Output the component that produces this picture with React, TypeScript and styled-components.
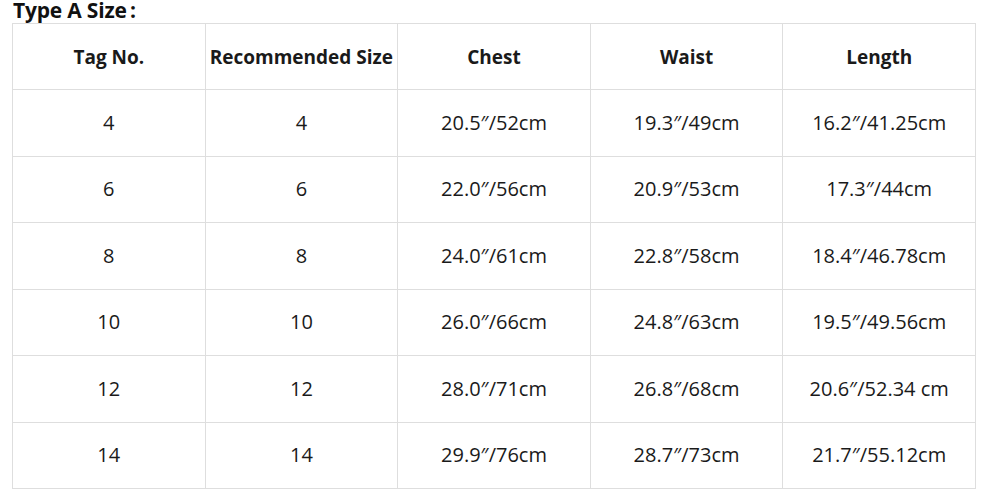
import styled, { createGlobalStyle } from 'styled-components';

const GlobalStyle = createGlobalStyle`
	html, body {
		margin: 0;
		padding: 0;
		background: #ffffff;
	}
	body {
		font-family: 'Open Sans', 'Noto Sans', sans-serif;
		color: #1c1c1c;
	}
`;

const Wrapper = styled.div`
	padding: 0 25px 0 12px;
	width: 1000px;
	box-sizing: border-box;
`;

const Title = styled.div`
	font-size: 21px;
	font-weight: 700;
	line-height: 20px;
	height: 23px;
	margin: 0 0 0 1px;
	color: #111;
	letter-spacing: -0.2px;
`;

const Table = styled.table`
	width: 964px;
	border-collapse: collapse;
	table-layout: fixed;
	border: 1px solid #dedede;
`;

const HeadCell = styled.th`
	height: 65px;
	border: 1px solid #dedede;
	font-size: 19px;
	line-height: 22px;
	font-weight: 700;
	text-align: center;
	padding: 0;
	white-space: nowrap;
	color: #1a1a1a;
`;

const Cell = styled.td`
	height: 65.5px;
	border: 1px solid #dedede;
	font-size: 20px;
	line-height: 22px;
	font-weight: 400;
	text-align: center;
	padding: 0;
	white-space: nowrap;
	color: #1a1a1a;
`;

const headers = ['Tag No.', 'Recommended Size', 'Chest', 'Waist', 'Length'];

const rows = [
	['4', '4', '20.5″/52cm', '19.3″/49cm', '16.2″/41.25cm'],
	['6', '6', '22.0″/56cm', '20.9″/53cm', '17.3″/44cm'],
	['8', '8', '24.0″/61cm', '22.8″/58cm', '18.4″/46.78cm'],
	['10', '10', '26.0″/66cm', '24.8″/63cm', '19.5″/49.56cm'],
	['12', '12', '28.0″/71cm', '26.8″/68cm', '20.6″/52.34 cm'],
	['14', '14', '29.9″/76cm', '28.7″/73cm', '21.7″/55.12cm'],
];

const App = () => {
	return (
		<Wrapper>
			<GlobalStyle />
			<Title>Type A Size{'\u2009'}:</Title>
			<Table>
				<thead>
					<tr>
						{headers.map((h) => (
							<HeadCell key={h}>{h}</HeadCell>
						))}
					</tr>
				</thead>
				<tbody>
					{rows.map((r) => (
						<tr key={r[0]}>
							{r.map((c, i) => (
								<Cell key={i}>{c}</Cell>
							))}
						</tr>
					))}
				</tbody>
			</Table>
		</Wrapper>
	);
};

export default App;
